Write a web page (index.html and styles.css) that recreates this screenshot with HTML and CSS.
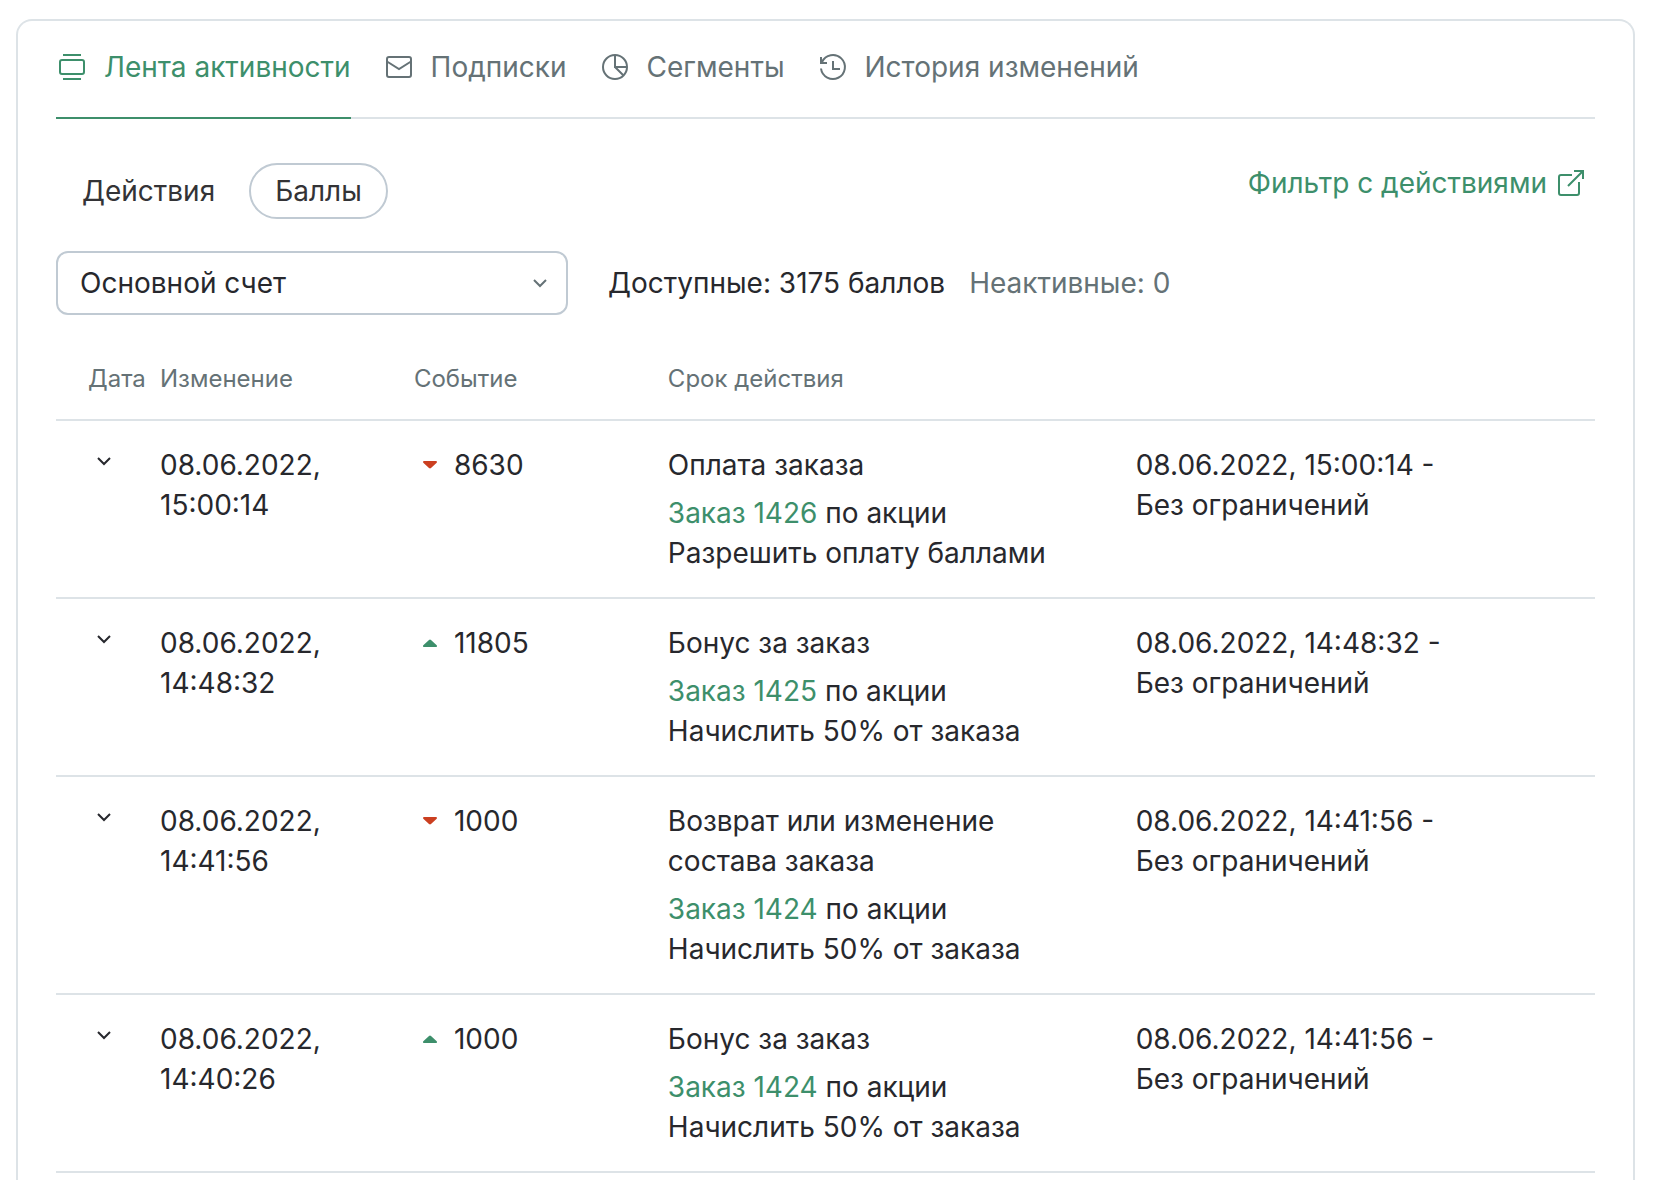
FILE: index.html
```html
<!DOCTYPE html>
<html lang="ru">
<head>
<meta charset="utf-8">
<meta name="viewport" content="width=device-width, initial-scale=1">
<title>Лента активности</title>
<link rel="stylesheet" href="styles.css">
</head>
<body>
<svg class="sprite" aria-hidden="true">
  <symbol id="chevron" viewBox="0 0 32 32"><path d="M10 13l6 6 6-6"/></symbol>
  <symbol id="down" viewBox="0 0 32 32"><path d="M10 12h12a1 1 0 0 1 .7 1.700L17 19a1.500 1.500 0 0 1-2 0l-5.700-5.300A1 1 0 0 1 10 12z"/></symbol>
  <symbol id="up" viewBox="0 0 32 32"><path d="M10 20h12a1 1 0 0 0 .7-1.700L17 13a1.500 1.500 0 0 0-2 0l-5.700 5.300A1 1 0 0 0 10 20z"/></symbol>
</svg>
<main class="card">
  <nav class="tabs">
    <button class="tab tab-active" type="button">
      <svg class="icon" viewBox="0 0 32 32"><path d="M7 4h18M7 28h18"/><rect x="4" y="9" width="24" height="14" rx="2"/></svg>
      Лента активности
    </button>
    <button class="tab" type="button">
      <svg class="icon" viewBox="0 0 32 32"><rect x="4" y="6" width="24" height="20" rx="2"/><path d="M4 10.500l12 7.500 12-7.500"/></svg>
      Подписки
    </button>
    <button class="tab" type="button">
      <svg class="icon" viewBox="0 0 32 32"><circle cx="16" cy="16" r="12"/><path d="M16 4v12h12M16 16l8.500 8.500"/></svg>
      Сегменты
    </button>
    <button class="tab" type="button">
      <svg class="icon" viewBox="0 0 32 32"><path d="M4 17.500A12 12 0 1 0 5 11M4 6v6h6M16 10v8h7"/></svg>
      История изменений
    </button>
  </nav>

  <div class="toolbar">
    <div class="switch">
      <button class="pill" type="button">Действия</button>
      <button class="pill pill-active" type="button">Баллы</button>
    </div>
    <a class="filter-link" href="#filter">
      Фильтр с действиями
      <svg class="icon" viewBox="0 0 32 32"><path d="M17 8H6a2 2 0 0 0-2 2v16a2 2 0 0 0 2 2h16a2 2 0 0 0 2-2V15M19 4h9v8M28 4L13 19"/></svg>
    </a>
  </div>

  <div class="account">
    <div class="select-box">
      <select class="select" aria-label="Счет">
        <option>Основной счет</option>
      </select>
      <svg class="icon select-icon"><use href="#chevron"/></svg>
    </div>
    <p class="balance">Доступные: 3175 баллов</p>
    <p class="inactive">Неактивные: 0</p>
  </div>

  <table class="history">
    <thead>
      <tr>
        <th class="col-toggle">Дата</th>
        <th class="col-short">Изменение</th>
        <th class="col-short">Событие</th>
        <th class="col-event">Срок действия</th>
        <th></th>
      </tr>
    </thead>
    <tbody>
      <tr>
        <td class="col-toggle"><button class="toggle" type="button" aria-label="Развернуть"><svg class="icon"><use href="#chevron"/></svg></button></td>
        <td>08.06.2022,<br>15:00:14</td>
        <td><div class="amount"><svg class="arrow arrow-down"><use href="#down"/></svg>8630</div></td>
        <td class="col-event"><p>Оплата заказа</p><p class="details"><a href="#1426">Заказ 1426</a> по акции<br>Разрешить оплату баллами</p></td>
        <td>08.06.2022, 15:00:14 -<br>Без ограничений</td>
      </tr>
      <tr>
        <td class="col-toggle"><button class="toggle" type="button" aria-label="Развернуть"><svg class="icon"><use href="#chevron"/></svg></button></td>
        <td>08.06.2022,<br>14:48:32</td>
        <td><div class="amount"><svg class="arrow arrow-up"><use href="#up"/></svg>11805</div></td>
        <td class="col-event"><p>Бонус за заказ</p><p class="details"><a href="#1425">Заказ 1425</a> по акции<br>Начислить 50% от заказа</p></td>
        <td>08.06.2022, 14:48:32 -<br>Без ограничений</td>
      </tr>
      <tr>
        <td class="col-toggle"><button class="toggle" type="button" aria-label="Развернуть"><svg class="icon"><use href="#chevron"/></svg></button></td>
        <td>08.06.2022,<br>14:41:56</td>
        <td><div class="amount"><svg class="arrow arrow-down"><use href="#down"/></svg>1000</div></td>
        <td class="col-event"><p>Возврат или изменение состава заказа</p><p class="details"><a href="#1424">Заказ 1424</a> по акции<br>Начислить 50% от заказа</p></td>
        <td>08.06.2022, 14:41:56 -<br>Без ограничений</td>
      </tr>
      <tr>
        <td class="col-toggle"><button class="toggle" type="button" aria-label="Развернуть"><svg class="icon"><use href="#chevron"/></svg></button></td>
        <td>08.06.2022,<br>14:40:26</td>
        <td><div class="amount"><svg class="arrow arrow-up"><use href="#up"/></svg>1000</div></td>
        <td class="col-event"><p>Бонус за заказ</p><p class="details"><a href="#1424">Заказ 1424</a> по акции<br>Начислить 50% от заказа</p></td>
        <td>08.06.2022, 14:41:56 -<br>Без ограничений</td>
      </tr>
    </tbody>
  </table>
</main>
</body>
</html>
```
FILE: styles.css
```css
:root {
  --text: #27282d;
  --muted: #657276;
  --green: #3d8f6b;
  --red: #cb3f20;
  --line: #dde3e7;
  --control: #c0cad3;
}

* { box-sizing: border-box; }

body {
  margin: 0;
  padding: 19px 19px 0 16px;
  background: #fff;
  color: var(--text);
  font: 28px/40px Inter, "Liberation Sans", sans-serif;
}

p { margin: 0; }

button, select {
  margin: 0;
  padding: 0;
  border: 0;
  background: none;
  color: inherit;
  font: inherit;
  cursor: pointer;
}

a { color: var(--green); text-decoration: none; }

.sprite { display: none; }

.icon {
  display: block;
  flex: none;
  width: 32px;
  height: 32px;
  fill: none;
  stroke: currentColor;
  stroke-width: 2;
}

.card {
  min-height: calc(100vh - 19px);
  padding: 26px 38px 0;
  border: 2px solid var(--line);
  border-bottom: 0;
  border-radius: 16px 16px 0 0;
}

.tabs {
  display: flex;
  gap: 32px;
  box-shadow: inset 0 -2px var(--line);
}

.tab {
  display: flex;
  align-items: center;
  gap: 16px;
  padding-bottom: 30px;
  border-bottom: 2px solid transparent;
  color: var(--muted);
  white-space: nowrap;
}

.tab-active {
  border-color: var(--green);
  color: var(--green);
}

.toolbar {
  display: flex;
  justify-content: space-between;
  align-items: flex-start;
  margin-top: 44px;
}

.switch { display: flex; gap: 8px; }

.pill {
  height: 56px;
  padding: 0 24px;
  border: 2px solid transparent;
  border-radius: 28px;
  color: #333336;
}

.pill-active { border-color: var(--control); }

.filter-link {
  display: flex;
  align-items: center;
  gap: 8px;
  padding-right: 8px;
}

.account {
  display: flex;
  align-items: center;
  gap: 24px;
  margin-top: 32px;
}

.select-box {
  position: relative;
  width: 512px;
  margin-right: 16px;
}

.select {
  display: block;
  width: 100%;
  height: 64px;
  padding: 0 48px 0 22px;
  border: 2px solid var(--control);
  border-radius: 12px;
  appearance: none;
}

.select-icon {
  position: absolute;
  top: 16px;
  right: 12px;
  color: var(--muted);
  pointer-events: none;
}

.inactive { color: var(--muted); }

.history {
  width: 100%;
  margin-top: 24px;
  border-collapse: separate;
  border-spacing: 0;
  table-layout: fixed;
}

.history th, .history td {
  padding: 24px 0;
  border-bottom: 2px solid var(--line);
  text-align: left;
  vertical-align: top;
}

.history th {
  color: var(--muted);
  font-size: 24px;
  font-weight: 400;
  line-height: 32px;
}

.history .col-toggle { width: 104px; padding-left: 32px; }
.history .col-short { width: 16.5%; }
.history .col-event { width: 30.4%; padding-right: 32px; }

.toggle { display: block; }

.amount {
  display: flex;
  align-items: center;
  gap: 8px;
}

.arrow { width: 32px; height: 32px; fill: currentColor; }
.arrow-down { color: var(--red); }
.arrow-up { color: var(--green); }

.details { margin-top: 8px; }
```
